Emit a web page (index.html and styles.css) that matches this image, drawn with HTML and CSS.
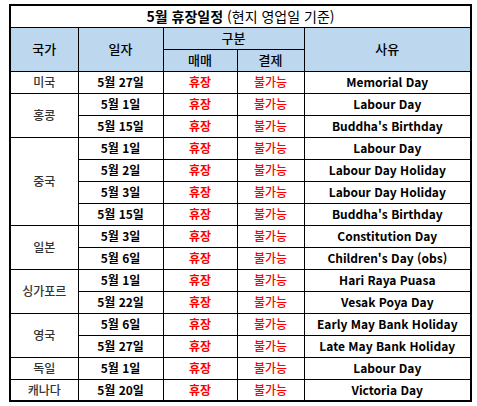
FILE: index.html
```html
<!DOCTYPE html>
<html lang="ko">
<head>
    <meta charset="UTF-8">
    <title>5월 휴장일정</title>
    <link rel="stylesheet" href="styles.css">
</head>
<body>
    <table class="holiday">
        <colgroup>
            <col class="c-country">
            <col class="c-date">
            <col class="c-trade">
            <col class="c-settle">
            <col class="c-reason">
        </colgroup>
        <tr class="title-row">
            <td colspan="5"><b>5월 휴장일정</b> (현지 영업일 기준)</td>
        </tr>
        <tr class="head">
            <th rowspan="2">국가</th>
            <th rowspan="2">일자</th>
            <th colspan="2">구분</th>
            <th rowspan="2" class="reason-head">사유</th>
        </tr>
        <tr class="head">
            <th>매매</th>
            <th>결제</th>
        </tr>
        <tr><td class="country">미국</td><td class="date">5월 27일</td><td class="closed">휴장</td><td class="na">불가능</td><td class="reason">Memorial Day</td></tr>
        <tr><td class="country" rowspan="2">홍콩</td><td class="date">5월 1일</td><td class="closed">휴장</td><td class="na">불가능</td><td class="reason">Labour Day</td></tr>
        <tr><td class="date">5월 15일</td><td class="closed">휴장</td><td class="na">불가능</td><td class="reason">Buddha's Birthday</td></tr>
        <tr><td class="country" rowspan="4">중국</td><td class="date">5월 1일</td><td class="closed">휴장</td><td class="na">불가능</td><td class="reason">Labour Day</td></tr>
        <tr><td class="date">5월 2일</td><td class="closed">휴장</td><td class="na">불가능</td><td class="reason">Labour Day Holiday</td></tr>
        <tr><td class="date">5월 3일</td><td class="closed">휴장</td><td class="na">불가능</td><td class="reason">Labour Day Holiday</td></tr>
        <tr><td class="date">5월 15일</td><td class="closed">휴장</td><td class="na">불가능</td><td class="reason">Buddha's Birthday</td></tr>
        <tr><td class="country" rowspan="2">일본</td><td class="date">5월 3일</td><td class="closed">휴장</td><td class="na">불가능</td><td class="reason">Constitution Day</td></tr>
        <tr><td class="date">5월 6일</td><td class="closed">휴장</td><td class="na">불가능</td><td class="reason">Children's Day (obs)</td></tr>
        <tr><td class="country" rowspan="2">싱가포르</td><td class="date">5월 1일</td><td class="closed">휴장</td><td class="na">불가능</td><td class="reason">Hari Raya Puasa</td></tr>
        <tr><td class="date">5월 22일</td><td class="closed">휴장</td><td class="na">불가능</td><td class="reason">Vesak Poya Day</td></tr>
        <tr><td class="country" rowspan="2">영국</td><td class="date">5월 6일</td><td class="closed">휴장</td><td class="na">불가능</td><td class="reason">Early May Bank Holiday</td></tr>
        <tr><td class="date">5월 27일</td><td class="closed">휴장</td><td class="na">불가능</td><td class="reason">Late May Bank Holiday</td></tr>
        <tr><td class="country">독일</td><td class="date">5월 1일</td><td class="closed">휴장</td><td class="na">불가능</td><td class="reason">Labour Day</td></tr>
        <tr><td class="country">캐나다</td><td class="date">5월 20일</td><td class="closed">휴장</td><td class="na">불가능</td><td class="reason">Victoria Day</td></tr>
    </table>
</body>
</html>
```

FILE: styles.css
```css
body {
    margin: 0;
    background: #fff;
    font-family: "Noto Sans CJK KR", "Noto Sans", sans-serif;
    font-size: 12px;
    color: #000;
}

.holiday {
    margin: 4px 0 0 9px;
    width: 461px;
    border-collapse: collapse;
    table-layout: fixed;
    border: 2px solid #000;
}

.c-country { width: 68px; }
.c-date { width: 85px; }
.c-trade { width: 74px; }
.c-settle { width: 67px; }
.c-reason { width: 167px; }

.holiday tr {
    height: 22px;
}

.holiday td,
.holiday th {
    border: 1px solid #000;
    padding: 0;
    text-align: center;
    line-height: 20px;
    white-space: nowrap;
}

.title-row td {
    font-size: 14px;
    font-weight: 400;
}

.title-row b {
    font-weight: 700;
}

.head th {
    background: #bdd7ee;
    font-weight: 500;
    font-size: 13px;
}

.country {
    font-weight: 500;
    color: #333;
}

.date {
    font-weight: 700;
}

.closed {
    color: #ff0000;
    font-weight: 700;
}

.na {
    color: #ff0000;
    font-weight: 500;
}

.reason {
    font-weight: 700;
}
```
